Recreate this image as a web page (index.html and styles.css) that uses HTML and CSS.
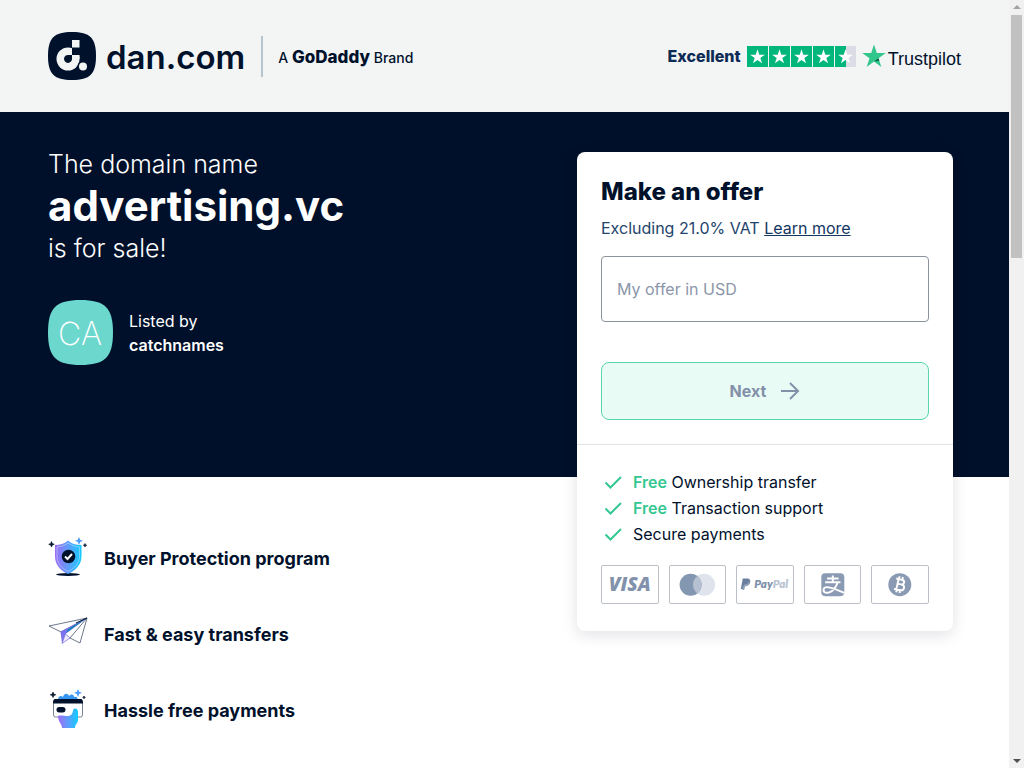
FILE: index.html
```html
<!DOCTYPE html>
<html lang="en">
<head>
<meta charset="utf-8">
<meta name="viewport" content="width=device-width, initial-scale=1">
<title>advertising.vc is for sale</title>
<link rel="stylesheet" href="styles.css">
</head>
<body>
<svg class="defs" width="0" height="0" aria-hidden="true">
  <defs>
    <linearGradient id="violet-blue" x1="0" y1="0" x2="1" y2="0"><stop offset="0" stop-color="#a06cf5"/><stop offset="0.5" stop-color="#5f9dfb"/><stop offset="1" stop-color="#12ccff"/></linearGradient>
    <symbol id="star" viewBox="0 0 24 24"><path d="M12 .5l2.800 8.500h9l-7.300 5.300 2.800 8.600-7.300-5.300-7.300 5.300 2.800-8.600L.2 9h9z"/></symbol>
    <symbol id="tick" viewBox="0 0 24 24"><path d="M4.500 12.500l5 5L20 7" fill="none" stroke="#35c791" stroke-width="2"/></symbol>
  </defs>
</svg>
<header class="topbar">
  <div class="brand">
    <svg class="brand-mark" viewBox="0 0 48 48" aria-hidden="true">
      <path d="M24 0C42 0 48 6 48 24S42 48 24 48 0 42 0 24 6 0 24 0z" fill="#00112c"/>
      <circle cx="20" cy="27" r="11.500" fill="#f3f4f4"/>
      <path d="M24 14h9v9h-9z" fill="#00112c"/>
      <path d="M24 8h7.500v7.500H24z" fill="#f3f4f4"/>
      <path d="M20.500 23H24v4a4 4 0 1 1-3.500-4z" fill="#00112c"/>
      <path d="M24 23h7.500v4H24z" fill="#f3f4f4"/>
      <circle cx="35" cy="34.500" r="5.500" fill="#00112c"/>
      <circle cx="35" cy="34.500" r="4" fill="#f3f4f4"/>
    </svg>
    <span class="brand-name">dan.com</span>
    <span class="brand-parent">A <b>GoDaddy</b> Brand</span>
  </div>
  <div class="rating">
    <span class="rating-word">Excellent</span>
    <span class="rating-stars">
      <svg viewBox="0 0 24 24"><use href="#star"/></svg>
      <svg viewBox="0 0 24 24"><use href="#star"/></svg>
      <svg viewBox="0 0 24 24"><use href="#star"/></svg>
      <svg viewBox="0 0 24 24"><use href="#star"/></svg>
      <svg class="half" viewBox="0 0 24 24"><use href="#star"/></svg>
    </span>
    <svg class="trust-star" viewBox="0 0 24 24"><use href="#star"/><path d="M16.500 14.300l.8 2.500-5.300.8z" fill="#0b5c45"/></svg>
    <span class="trust-name">Trustpilot</span>
  </div>
</header>
<main>
  <section class="hero">
    <div class="pitch">
      <h1><span>The domain name</span> <strong>advertising.vc</strong> <span>is for sale!</span></h1>
      <div class="seller">
        <svg class="avatar" viewBox="0 0 65 65" role="img" aria-label="CA"><path d="M32.500 0C57 0 65 8 65 32.500S57 65 32.500 65 0 57 0 32.500 8 0 32.500 0z" fill="#6bd7cd"/><text x="32" y="45" text-anchor="middle">CA</text></svg>
        <p>Listed by<br><b>catchnames</b></p>
      </div>
    </div>
    <div class="card">
      <form class="offer">
        <h2>Make an offer</h2>
        <p class="vat">Excluding 21.0% VAT <a href="#vat">Learn more</a></p>
        <input type="text" aria-label="My offer in USD" placeholder="My offer in USD">
        <button type="button">Next
          <svg viewBox="0 0 20 20" aria-hidden="true"><path d="M1 10h17M10 2l8 8-8 8" fill="none" stroke="#8390a8" stroke-width="2"/></svg>
        </button>
      </form>
      <div class="perks">
        <ul>
          <li><svg><use href="#tick"/></svg><span><b>Free</b> Ownership transfer</span></li>
          <li><svg><use href="#tick"/></svg><span><b>Free</b> Transaction support</span></li>
          <li><svg><use href="#tick"/></svg><span>Secure payments</span></li>
        </ul>
        <div class="methods">
          <svg viewBox="0 0 58 39" role="img" aria-label="Visa"><text class="visa" x="29" y="26" text-anchor="middle">VISA</text></svg>
          <svg viewBox="0 0 58 39" role="img" aria-label="Mastercard"><circle cx="35.500" cy="19.500" r="11.500" fill="#dfe4ec"/><circle cx="21.500" cy="19.500" r="11.500" fill="#8497b0"/><path d="M28.500 10.400a11.500 11.500 0 0 1 0 18.200 11.500 11.500 0 0 1 0-18.200z" fill="#b5c0d0"/></svg>
          <svg viewBox="0 0 58 39" role="img" aria-label="PayPal"><path d="M6 13h5c4 0 4 7-1 7H8l-1 4H4z" fill="#6a7fa0"/><path d="M12.500 15c2 4-1 6-4 6l-1 4H5.500l1-4 1.500-2c3 0 4-1 4.500-4z" fill="#93a3bb"/><text class="paypal" x="18" y="23">Pay<tspan fill="#b9c4d2">Pal</tspan></text></svg>
          <svg viewBox="0 0 58 39" role="img" aria-label="Alipay"><rect x="17" y="7.500" width="24" height="24" rx="4" fill="#8a9ab3"/><path d="M23 13h12M21 17h16M29 10v7M34 17c-1 5-6 11-11 11-5 0-5-6 0-6 6 0 9 3 18 6" fill="none" stroke="#fff" stroke-width="2"/></svg>
          <svg viewBox="0 0 58 39" role="img" aria-label="Bitcoin"><circle cx="29" cy="19.500" r="12" fill="#8a9ab3"/><g transform="rotate(12 29 19.500)" fill="none" stroke="#fff" stroke-width="2"><path d="M24 14h6c4 0 4 5 0 5h-4 5c4 0 4 6 0 6h-7M26.500 14v11M27 11v3M30.500 11v3M27 25v3M30.500 25v3"/></g></svg>
        </div>
      </div>
    </div>
  </section>
  <ul class="features">
    <li>
      <svg viewBox="0 0 40 40" aria-hidden="true">
        <ellipse cx="20" cy="37.500" rx="12" ry="1.500" fill="#00112c"/>
        <path d="M20 3.500c4 3.500 8 4.500 13.500 4.500v11c0 8-5 14-13.500 18C11.500 33 7 27 7 19V8c5 0 9-1 13-4.500z" fill="url(#violet-blue)"/>
        <path d="M20 6c4 2.500 7 3.500 11.500 4v9c0 7-4.500 12-11.500 15.500C13 31 9 26 9 19v-9c4-.5 7.500-1.500 11-4z" fill="none" stroke="#b9dcff" stroke-width=".6"/>
        <circle cx="20.500" cy="19.500" r="6.800" fill="#00112c"/><path d="M17 19.500l2.500 2.500 4.500-5" fill="none" stroke="#fff" stroke-width="2"/>
        <path d="M31 0l1.200 2.700 2.800 1.100-2.800 1.100L31 8l-1.200-3.100L27 3.800l2.800-1.100z" fill="#4f9cff"/>
        <path d="M3.500 4.500l.8 2 2 .8-2 .8-.8 2-.8-2-2-.8 2-.8zM37 6.500l.5 1.200 1.200.5-1.200.5L37 10l-.5-1.300-1.200-.5 1.200-.5z" fill="#00112c" stroke="#00112c" stroke-width=".6"/>
      </svg>
      <h3>Buyer Protection program</h3>
    </li>
    <li>
      <svg viewBox="0 0 40 40" aria-hidden="true">
        <path d="M39 5L1 13l12 6zM39 5L32 30l-10-5z" fill="#fff" stroke="#45566f" stroke-width=".8"/>
        <path d="M39 5L12.500 18.500 14 30.500 17.500 21z" fill="#7b71ed"/><path d="M39 5L20 16l-2 4z" fill="#1784b4"/><path d="M14 30.500l8-5.500-4.500-4z" fill="#eeeaff" stroke="#6f68d8" stroke-width=".7"/><path d="M39 5L28 10" stroke="#00112c" stroke-width="1"/>
      </svg>
      <h3>Fast &amp; easy transfers</h3>
    </li>
    <li>
      <svg viewBox="0 0 40 40" aria-hidden="true">
        <path d="M10 11c0-4 3-5 5-3 1-4 5-4 6-1 3-3 5-1 5 1 3-1 4 1 4 4z" fill="#3495f3"/>
        <rect x="5.500" y="11" width="29" height="17" rx="2" fill="#fff" stroke="#53657e" stroke-width=".8"/>
        <path d="M7 10h26q2 0 2 4.500H5Q5 10 7 10z" fill="#00112c"/>
        <path d="M10 27c2-1 7 0 10 0 4 0 5-4 5-6 2-3 5-1 5 2v8c0 3-3 4-3 8H14c0-4-4-6-4-12z" fill="url(#violet-blue)"/>
        <rect x="8.500" y="18" width="9" height="5.500" rx="2.700" fill="#00112c"/>
        <path d="M30 0l1.200 2.700L34 3.800l-2.800 1.100L30 8l-1.200-3.100L26 3.800l2.800-1.100z" fill="#4f9cff"/>
        <path d="M5 3l.8 2 2 .8-2 .8-.8 2-.8-2-2-.8 2-.8zM36 7l.4 1 1 .4-1 .4-.4 1-.4-1-1-.4 1-.4z" fill="#00112c" stroke="#00112c" stroke-width=".6"/>
      </svg>
      <h3>Hassle free payments</h3>
    </li>
  </ul>
</main>
<div class="scrollbar" aria-hidden="true"><i class="up"></i><i class="thumb"></i><i class="down"></i></div>
</body>
</html>
```

FILE: styles.css
```css
* { box-sizing: border-box; }
body { margin: 0; padding-right: 15px; background: #fff; color: #00112c; font: 16px/24px Inter, "Liberation Sans", sans-serif; }
h1, h2, h3, p, ul { margin: 0; padding: 0; }
ul { list-style: none; }
.defs { position: absolute; }

.topbar { display: flex; justify-content: space-between; align-items: center; padding: 32px 48px; background: #f3f4f4; }
.brand, .rating { display: flex; align-items: center; }
.brand-mark { width: 48px; height: 48px; }
.brand-name { margin-left: 10px; padding-top: 2px; font-size: 33px; line-height: 46px; font-weight: 600; }
.brand-parent { margin-left: 16px; padding: 2px 0 0 15px; border-left: 2px solid #b6c4d0; font-size: 14px; line-height: 38px; font-weight: 500; }
.brand-parent b { font-size: 17px; font-weight: 800; }

.rating-word { color: #0e2b55; font-size: 16px; font-weight: 800; }
.rating-stars { display: flex; gap: 1px; margin: 0 6px; }
.rating-stars svg { width: 21px; height: 21px; padding: 3px; background: #00b67a; fill: #fff; }
.rating-stars .half { background: linear-gradient(90deg, #00b67a 50%, #dcdce6 50%); }
.trust-star { width: 24px; height: 24px; fill: #31c78c; }
.trust-name { padding: 6px 0 0 2px; font: 18px/24px "Liberation Sans", sans-serif; }

.hero { display: flex; justify-content: space-between; padding: 40px 56px 0 48px; background: #00102a; }
.pitch { color: #fff; }
h1 { font-size: 25px; font-weight: 300; line-height: 24px; }
h1 span, h1 strong { display: block; }
h1 strong { padding: 6px 0; font-size: 42px; line-height: 48px; font-weight: 700; }
.seller { display: flex; align-items: center; gap: 16px; margin-top: 40px; }
.seller b { font-weight: 600; }
.avatar { width: 65px; height: 65px; }
.avatar text { fill: #fff; font-size: 32px; font-weight: 200; }

.card { position: relative; width: 376px; margin-bottom: -154px; background: #fff; border-radius: 8px; box-shadow: 0 4px 16px rgba(0, 17, 44, .12); }
.offer { padding: 24px; border-bottom: 1px solid #dfe3e6; }
h2 { font-size: 24px; line-height: 32px; font-weight: 800; }
.vat { margin-top: 8px; color: #23446c; }
.vat a { color: #14365f; }
.offer input { display: block; width: 100%; height: 66px; margin-top: 16px; padding: 0 15px; border: 1px solid #8c939c; border-radius: 4px; font: inherit; }
.offer input::placeholder { color: #8b96aa; opacity: 1; }
.offer button { display: flex; align-items: center; justify-content: center; gap: 14px; width: 100%; height: 58px; margin-top: 40px; border: 1px solid #57d5ae; border-radius: 8px; background: #e9fbf5; color: #8390a8; font: inherit; font-weight: 700; }
.offer button svg { width: 20px; height: 20px; }
.perks { padding: 24px 24px 27px; }
.perks li { display: flex; align-items: center; gap: 8px; line-height: 26px; }
.perks li svg { width: 24px; height: 24px; }
.perks b { color: #35c791; font-weight: 600; }
.methods { display: grid; grid-template-columns: repeat(5, 1fr); gap: 10px; margin-top: 18px; }
.methods svg { display: block; width: 100%; border: 1px solid #bcc1c7; border-radius: 2px; }
.visa { fill: #8292ac; font: italic 800 20px "Open Sans", sans-serif; }
.paypal { fill: #7f90ab; font: italic 800 12px Lato, sans-serif; }

.features { padding: 60px 48px 40px; }
.features li { display: flex; align-items: center; gap: 16px; }
.features li + li { margin-top: 36px; }
.features svg { width: 40px; height: 40px; }
h3 { padding-top: 4px; font-size: 18px; line-height: 24px; font-weight: 700; }

.scrollbar { position: fixed; top: 0; right: 0; bottom: 0; display: flex; flex-direction: column; align-items: center; width: 15px; padding: 5px 0; background: #f1f1f1; }
.up, .down { border: 4px solid transparent; }
.up { border-top: 0; border-bottom-color: #a3a3a3; }
.down { margin-top: auto; border-bottom: 0; border-top-color: #505050; }
.thumb { width: 11px; height: 32%; margin-top: 6px; background: #c1c1c1; }
```
